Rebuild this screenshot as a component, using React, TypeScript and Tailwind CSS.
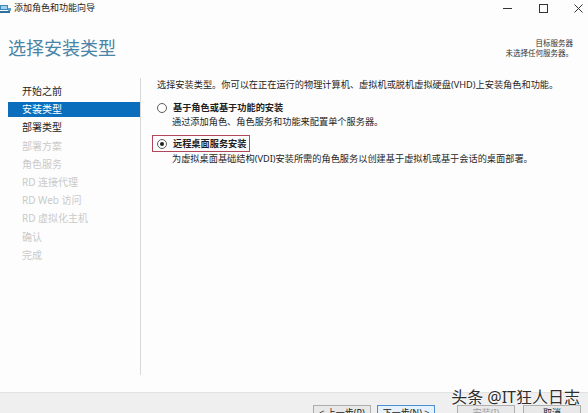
import { ReactNode } from "react";

const steps = [
  { label: "开始之前", state: "done" },
  { label: "安装类型", state: "active" },
  { label: "部署类型", state: "done" },
  { label: "部署方案", state: "off" },
  { label: "角色服务", state: "off" },
  { label: "RD 连接代理", state: "off" },
  { label: "RD Web 访问", state: "off" },
  { label: "RD 虚拟化主机", state: "off" },
  { label: "确认", state: "off" },
  { label: "完成", state: "off" },
];

const Radio = ({ checked }: { checked?: boolean }) => (
  <span className="w-[10px] h-[10px] rounded-full border border-[#5c5c5c] bg-white flex items-center justify-center shrink-0">
    {checked && <span className="w-[4px] h-[4px] rounded-full bg-[#222]" />}
  </span>
);

const Button = ({ children, focused, disabled }: { children: ReactNode; focused?: boolean; disabled?: boolean }) => (
  <div
    className={`w-[58px] h-[20px] flex justify-center pt-[1px] text-[9px] leading-[12px] border ${
      focused ? "border-[#4a8fd6] bg-[#e5f1fb]" : "border-[#adadad] bg-[#e8e8e8]"
    } ${disabled ? "text-[#a0a0a0]" : "text-[#222]"}`}
  >
    {children}
  </div>
);

const App = () => {
  return (
    <div className="w-[588px] h-[413px] relative overflow-hidden flex flex-col bg-[#fdfdfd] text-[#1f1f1f] font-['Noto_Sans','Noto_Sans_CJK_SC',sans-serif]">
      {/* title bar */}
      <div className="h-[16px] flex items-center">
        <svg width="11" height="10" viewBox="0 0 11 10" className="mt-[1px]">
          <rect x="0" y="1" width="8" height="5" fill="#3c86b8" />
          <rect x="1" y="2" width="6" height="3" fill="#9fd0ee" />
          <rect x="0" y="7" width="10" height="2" fill="#2f6f9a" />
          <rect x="8" y="4" width="3" height="3" fill="#5aa0cf" />
        </svg>
        <span className="ml-[3px] text-[9px] leading-[10px] text-[#222]">添加角色和功能向导</span>
        <div className="ml-auto flex items-center">
          <svg width="9" height="9" viewBox="0 0 9 9" className="mr-[27px]">
            <line x1="0" y1="4.5" x2="9" y2="4.5" stroke="#333" strokeWidth="1" />
          </svg>
          <svg width="9" height="9" viewBox="0 0 9 9" className="mr-[26px]">
            <rect x="0.5" y="0.5" width="8" height="8" fill="none" stroke="#333" strokeWidth="1" />
          </svg>
          <svg width="9" height="9" viewBox="0 0 9 9" className="mr-[5px]">
            <path d="M0.5 0.5 L8.5 8.5 M8.5 0.5 L0.5 8.5" stroke="#333" strokeWidth="1" />
          </svg>
        </div>
      </div>

      {/* header */}
      <div className="h-[62px] flex items-start">
        <h1 className="ml-[8px] mt-[22px] text-[18px] leading-[20px] font-normal text-[#4a84a6]">选择安装类型</h1>
        <div className="ml-auto mr-[15px] mt-[22px] flex flex-col items-end text-[7.5px] leading-[10px] text-[#333]">
          <span>目标服务器</span>
          <span>未选择任何服务器。</span>
        </div>
      </div>

      {/* main */}
      <div className="h-[297px] flex">
        {/* nav */}
        <div className="w-[141px] border-r border-[#d9d9d9] pl-[8px] pt-[4px] flex flex-col">
          {steps.map((s, i) => (
            <div key={i} className="h-[18.2px] flex items-center">
              <div
                className={`w-full h-[15px] pl-[14px] flex items-center text-[10px] leading-[12px] ${
                  s.state === "active" ? "bg-[#0b6ebd] text-white" : s.state === "off" ? "text-[#cacaca]" : "text-[#222]"
                }`}
              >
                {s.label}
              </div>
            </div>
          ))}
        </div>

        {/* content */}
        <div className="flex-1 pl-[16px] pt-[1px] flex flex-col text-[9.2px] leading-[12px]">
          <p>选择安装类型。你可以在正在运行的物理计算机、虚拟机或脱机虚拟硬盘(VHD)上安装角色和功能。</p>

          <div className="mt-[11px] flex items-center gap-[6px]">
            <Radio />
            <span className="font-bold">基于角色或基于功能的安装</span>
          </div>
          <p className="mt-[2px] pl-[15px]">通过添加角色、角色服务和功能来配置单个服务器。</p>

          <div className="mt-[7px] -ml-[5px] w-[98px] h-[17px] border-[1.5px] border-[#b2475c] pl-[4px] flex items-center gap-[6px]">
            <Radio checked />
            <span className="font-bold">远程桌面服务安装</span>
          </div>
          <p className="mt-[1px] pl-[15px]">为虚拟桌面基础结构(VDI)安装所需的角色服务以创建基于虚拟机或基于会话的桌面部署。</p>
        </div>
      </div>

      <div className="flex-1" />

      {/* footer */}
      <div className="h-[21px] bg-[#efefef] border-t border-[#e2e2e2] flex items-start pt-[12px] pl-[313px] overflow-hidden">
        <div className="flex">
          <Button>&lt; 上一步(P)</Button>
          <div className="ml-[6px]">
            <Button focused>下一步(N) &gt;</Button>
          </div>
          <div className="ml-[22px]">
            <Button disabled>安装(I)</Button>
          </div>
          <div className="ml-[8px]">
            <Button>取消</Button>
          </div>
        </div>
      </div>

      {/* watermark */}
      <div className="absolute right-[8px] bottom-[7px] text-[16px] leading-[18px] text-[#2e2e2e] [text-shadow:0_0_2px_#fff,0_0_2px_#fff]">
        头条 @IT狂人日志
      </div>
    </div>
  );
};

export default App;
